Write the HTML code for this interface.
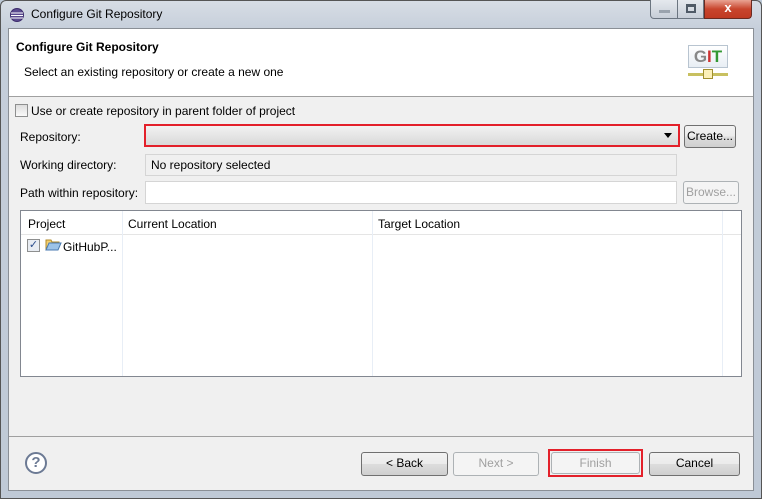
<!DOCTYPE html>
<html><head><style>
*{margin:0;padding:0;box-sizing:border-box}
body{width:762px;height:499px;overflow:hidden;background:#bcc8d6;font-family:"Liberation Sans",sans-serif;font-size:12px;color:#000;position:relative}
.a{position:absolute}
.frame{left:0;top:0;width:762px;height:499px;background:linear-gradient(#d7dde5,#c5ceda 30px,#bfc9d6);border:1px solid #555;border-radius:6px 6px 0 0}
.client{left:8px;top:28px;width:746px;height:463px;background:#f0f0f0;border:1px solid #8a8f96}
.btn{border:1px solid #707070;border-radius:3px;background:linear-gradient(#f2f2f2,#ebebeb 50%,#dddddd 51%,#cfcfcf);text-align:center;line-height:21px}
.dis{border-color:#adb2b5;color:#a0a0a0;background:#f4f4f4}
.box{border:1px solid #d5d5d5;background:#fff}
</style></head><body>
<div class="a frame"></div>
<svg class="a" style="left:9px;top:7px" width="16" height="16"><circle cx="8" cy="8" r="7" fill="#3b2a6b"/><ellipse cx="8" cy="8" rx="6" ry="6" fill="#5a4a8f"/><path d="M2 6h12M2 8.5h12M2 11h12" stroke="#fff" stroke-width="1.1"/></svg>
<div class="a" style="left:31px;top:7px;font-size:12px;color:#000">Configure Git Repository</div>
<div class="a" style="left:650px;top:0;width:28px;height:19px;border:1px solid #6b7580;border-top:0;border-radius:0 0 0 4px;background:linear-gradient(#e5e9ee,#c7ced7)"><div class="a" style="left:8px;top:10px;width:11px;height:3px;background:#9aa3ad"></div></div>
<div class="a" style="left:677px;top:0;width:27px;height:19px;border:1px solid #6b7580;border-top:0;background:linear-gradient(#e5e9ee,#c7ced7)"><div class="a" style="left:8px;top:4px;width:10px;height:9px;border:2px solid #4f5a66;border-top-width:3px"></div></div>
<div class="a" style="left:704px;top:0;width:48px;height:19px;border:1px solid #6b2a20;border-top:0;border-radius:0 0 4px 0;background:linear-gradient(#e9a393,#c8452d 50%,#c03a22);color:#fff;font-weight:bold;text-align:center;font-size:13px;line-height:16px">x</div>
<div class="a client"></div>
<div class="a" style="left:9px;top:29px;width:744px;height:68px;background:#fff;border-bottom:1px solid #a0a0a0"></div>
<div class="a" style="left:16px;top:40px;font-weight:bold;font-size:12px">Configure Git Repository</div>
<div class="a" style="left:24px;top:65px">Select an existing repository or create a new one</div>
<div class="a" style="left:688px;top:45px;width:40px;height:23px;border:1px solid #b8c4d0;background:linear-gradient(#fff,#e8eef4);font:bold 17px 'Liberation Sans',sans-serif;text-align:center;line-height:22px"><span style="color:#888">G</span><span style="color:#c33">I</span><span style="color:#393">T</span></div>
<div class="a" style="left:688px;top:73px;width:40px;height:3px;background:#c8c060"></div>
<div class="a" style="left:703px;top:69px;width:10px;height:10px;border:1px solid #a09030;background:#fbf0b8"></div>
<div class="a" style="left:15px;top:104px;width:13px;height:13px;border:1px solid #8e8f8f;background:linear-gradient(#ddd,#fafafa)"></div>
<div class="a" style="left:31px;top:104px">Use or create repository in parent folder of project</div>
<div class="a" style="left:20px;top:130px">Repository:</div>
<div class="a" style="left:144px;top:124px;width:536px;height:23px;border:2px solid #e3202a;background:linear-gradient(#f2f2f2,#d9d9d9)"></div>
<div class="a" style="left:664px;top:133px;width:0;height:0;border-left:4px solid transparent;border-right:4px solid transparent;border-top:5px solid #000"></div>
<div class="a btn" style="left:684px;top:125px;width:52px;height:23px">Create...</div>
<div class="a" style="left:20px;top:158px">Working directory:</div>
<div class="a" style="left:145px;top:154px;width:532px;height:22px;border:1px solid #d5d5d5;background:#f0f0f0;padding:3px 5px">No repository selected</div>
<div class="a" style="left:20px;top:186px">Path within repository:</div>
<div class="a box" style="left:145px;top:181px;width:532px;height:23px"></div>
<div class="a btn dis" style="left:683px;top:181px;width:56px;height:23px">Browse...</div>
<div class="a" style="left:20px;top:210px;width:722px;height:167px;border:1px solid #828790;background:#fff"></div>
<div class="a" style="left:21px;top:211px;width:720px;height:24px;border-bottom:1px solid #e5e5e5;background:#fff"></div>
<div class="a" style="left:122px;top:211px;width:1px;height:165px;background:#e8eef6"></div>
<div class="a" style="left:372px;top:211px;width:1px;height:165px;background:#e8eef6"></div>
<div class="a" style="left:722px;top:211px;width:1px;height:165px;background:#e8eef6"></div>
<div class="a" style="left:28px;top:217px">Project</div>
<div class="a" style="left:128px;top:217px">Current Location</div>
<div class="a" style="left:378px;top:217px">Target Location</div>
<div class="a" style="left:27px;top:239px;width:13px;height:13px;border:1px solid #8e8f8f;background:#e8ecf2;color:#2a4c8c;font-size:11px;line-height:11px;text-align:center">✓</div>
<svg class="a" style="left:45px;top:238px" width="17" height="14"><path d="M1 2h5l1 2h7v2H4L1 12z" fill="#f3cf6e" stroke="#b08a2a"/><path d="M1 12l3-7h12l-3 7z" fill="#9cc3e8" stroke="#4a7ab0"/></svg>
<div class="a" style="left:63px;top:240px">GitHubP...</div>
<div class="a" style="left:9px;top:436px;width:744px;height:1px;background:#a0a0a0"></div>
<div class="a" style="left:25px;top:452px;width:22px;height:22px;border:2px solid #6c7a94;border-radius:50%;text-align:center;font-weight:bold;font-size:15px;line-height:18px;color:#6c7a94;background:#fff">?</div>
<div class="a btn" style="left:361px;top:452px;width:87px;height:24px">&lt; Back</div>
<div class="a btn dis" style="left:453px;top:452px;width:86px;height:24px">Next &gt;</div>
<div class="a" style="left:548px;top:449px;width:95px;height:28px;border:2px solid #e3202a"></div>
<div class="a btn dis" style="left:551px;top:452px;width:89px;height:22px;line-height:20px">Finish</div>
<div class="a btn" style="left:649px;top:452px;width:91px;height:24px">Cancel</div>
</body></html>
